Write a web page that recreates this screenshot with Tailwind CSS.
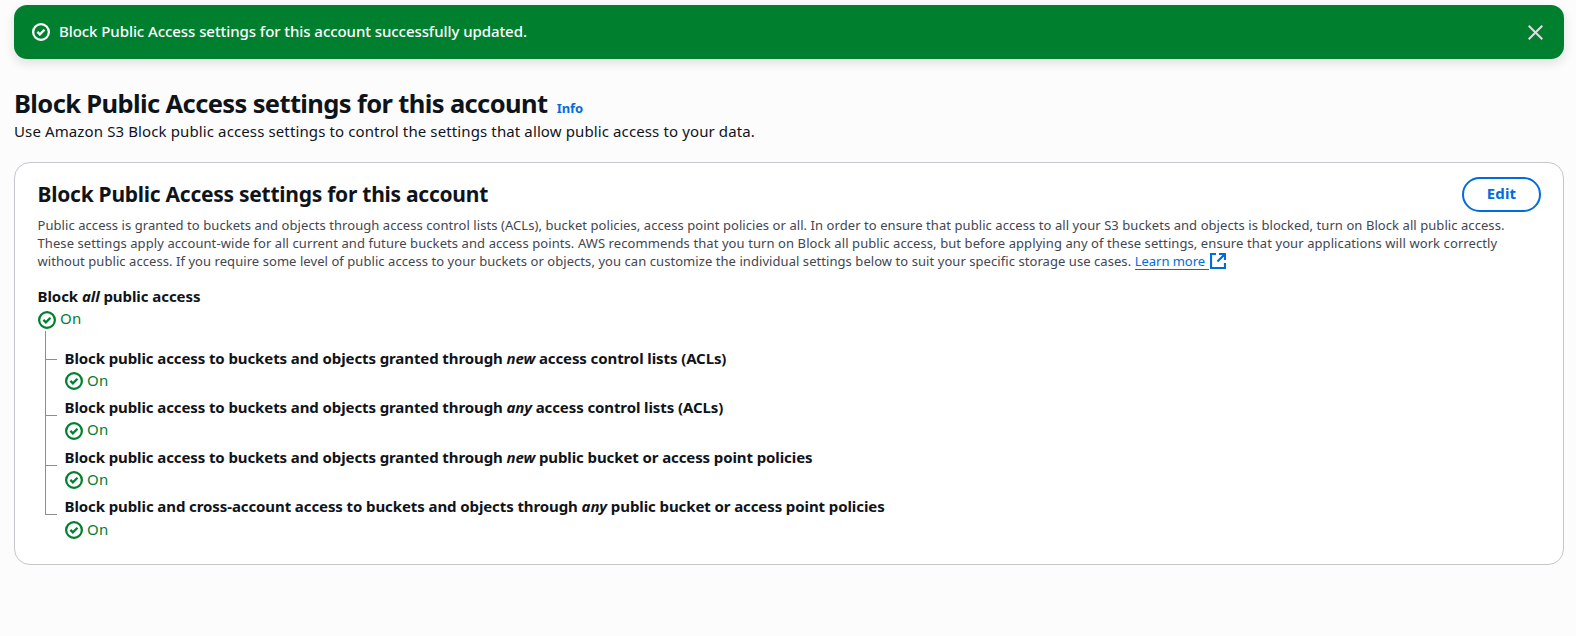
<!DOCTYPE html>
<html lang="en">
<head>
<meta charset="utf-8">
<title>Block Public Access settings</title>
<script src="https://cdn.jsdelivr.net/npm/@tailwindcss/browser@4"></script>
</head>
<body class="bg-[#fcfcfd] font-['Noto_Sans','Open_Sans',sans-serif] text-[#0f141a] text-[15px] leading-[22px] overflow-hidden">
<svg class="hidden">
  <symbol id="ok" viewBox="0 0 16 16"><circle cx="8" cy="8" r="7" fill="none" stroke="currentColor" stroke-width="2"/><path d="m4.8 7.900 2.200 2.200 4.100-4.100" fill="none" stroke="currentColor" stroke-width="2"/></symbol>
</svg>
<main class="pt-[5px] pl-[14px] pr-[12px]">
  <div class="flex h-[54px] items-center rounded-[13px] bg-[#00802f] pl-[18px] pr-[21.5px] text-white shadow-[0_4px_10px_1px_rgba(0,7,22,0.1)]">
    <svg class="size-[18px]"><use href="#ok"/></svg>
    <span class="-mt-[2px] ml-[9px] flex-1 whitespace-nowrap font-medium tracking-[-0.07px]">Block Public Access settings for this account successfully updated.</span>
    <svg class="size-[15px] text-[#dedee3]" viewBox="0 0 15 15"><path d="M.7.7l13.6 13.6M14.3.7L.7 14.3" fill="none" stroke="currentColor" stroke-width="2"/></svg>
  </div>

  <header class="mt-[29px]">
    <div class="flex items-baseline whitespace-nowrap">
      <h1 class="text-[25.5px] leading-[30px] font-bold tracking-[-0.62px]">Block Public Access settings for this account</h1>
      <a class="ml-[9.5px] text-[13px] leading-[18px] font-bold tracking-[-0.15px] text-[#006ce0]">Info</a>
    </div>
    <p class="mt-[3px] leading-[20px] tracking-[0.118px] whitespace-nowrap">Use Amazon S3 Block public access settings to control the settings that allow public access to your data.</p>
  </header>

  <section class="mt-[21px] h-[403px] rounded-[16px] border border-[#c6c6cd] bg-white pt-[14px] pl-[23px] pr-[22px]">
    <div class="flex items-start justify-between">
      <h2 class="-ml-[0.5px] mt-[4px] text-[21px] leading-[26px] font-bold tracking-[-0.26px] whitespace-nowrap">Block Public Access settings for this account</h2>
      <button class="h-[35px] w-[79px] rounded-[18px] border-2 border-[#006ce0] pb-[4px] leading-[22px] font-bold tracking-[0.15px] text-[#006ce0]">Edit</button>
    </div>
    <div class="-ml-[0.5px] mt-[4px] text-[13px] leading-[18px] whitespace-nowrap text-[#424650]">
      <p class="tracking-[0.066px]">Public access is granted to buckets and objects through access control lists (ACLs), bucket policies, access point policies or all. In order to ensure that public access to all your S3 buckets and objects is blocked, turn on Block all public access.</p>
      <p class="tracking-[0.085px]">These settings apply account-wide for all current and future buckets and access points. AWS recommends that you turn on Block all public access, but before applying any of these settings, ensure that your applications will work correctly</p>
      <p class="flex tracking-[0.061px]"><span>without public access. If you require some level of public access to your buckets or objects, you can customize the individual settings below to suit your specific storage use cases.</span>
        <a class="ml-[3.5px] flex tracking-[-0.03px] text-[#006ce0]"><span class="h-[18px] w-[74px] border-b border-[#006ce0]">Learn more</span><svg class="mt-[1px] ml-[1px] size-[16px]" viewBox="0 0 16 16"><path d="M6 1H1v14h14v-5M9 1h6v6M15 1L7.500 8.500" fill="none" stroke="currentColor" stroke-width="2.2"/></svg></a></p>
    </div>

    <div class="mt-[15px]">
      <div class="-ml-[0.5px] font-bold tracking-[-0.06px]">Block <i>all</i> public access</div>
      <div class="flex items-center text-[#00802f]"><svg class="mt-[4px] size-[18px]"><use href="#ok"/></svg><span class="ml-[4px] tracking-[0.3px]">On</span></div>
    </div>
    <div class="mt-[2px] flex">
      <div class="ml-[7px] h-[184px] w-[12px] text-[#8c8c94]">
        <svg class="h-[184px] w-[12px]" viewBox="0 0 12 184" shape-rendering="crispEdges"><path d="M.5 0V183.500H12M0 28.500H12M0 84.500H12M0 134.500H12" fill="none" stroke="currentColor"/></svg>
      </div>
      <ul class="mt-[16px] ml-[8px] flex flex-col gap-[5.4px] whitespace-nowrap">
        <li><div class="-ml-[0.5px] font-bold tracking-[-0.1px]">Block public access to buckets and objects granted through <i>new</i> access control lists (ACLs)</div>
          <div class="flex items-center text-[#00802f]"><svg class="mt-[2px] size-[18px]"><use href="#ok"/></svg><span class="ml-[4px] tracking-[0.3px]">On</span></div></li>
        <li><div class="-ml-[0.5px] font-bold tracking-[-0.1px]">Block public access to buckets and objects granted through <i>any</i> access control lists (ACLs)</div>
          <div class="flex items-center text-[#00802f]"><svg class="mt-[3px] size-[18px]"><use href="#ok"/></svg><span class="ml-[4px] tracking-[0.3px]">On</span></div></li>
        <li><div class="-ml-[0.5px] font-bold tracking-[-0.1px]">Block public access to buckets and objects granted through <i>new</i> public bucket or access point policies</div>
          <div class="flex items-center text-[#00802f]"><svg class="mt-[2px] size-[18px]"><use href="#ok"/></svg><span class="ml-[4px] tracking-[0.3px]">On</span></div></li>
        <li><div class="-ml-[0.5px] font-bold tracking-[-0.095px]">Block public and cross-account access to buckets and objects through <i>any</i> public bucket or access point policies</div>
          <div class="flex items-center pt-[0.5px] text-[#00802f]"><svg class="mt-[2px] size-[18px]"><use href="#ok"/></svg><span class="ml-[4px] tracking-[0.3px]">On</span></div></li>
      </ul>
    </div>
  </section>
</main>
</body>
</html>
